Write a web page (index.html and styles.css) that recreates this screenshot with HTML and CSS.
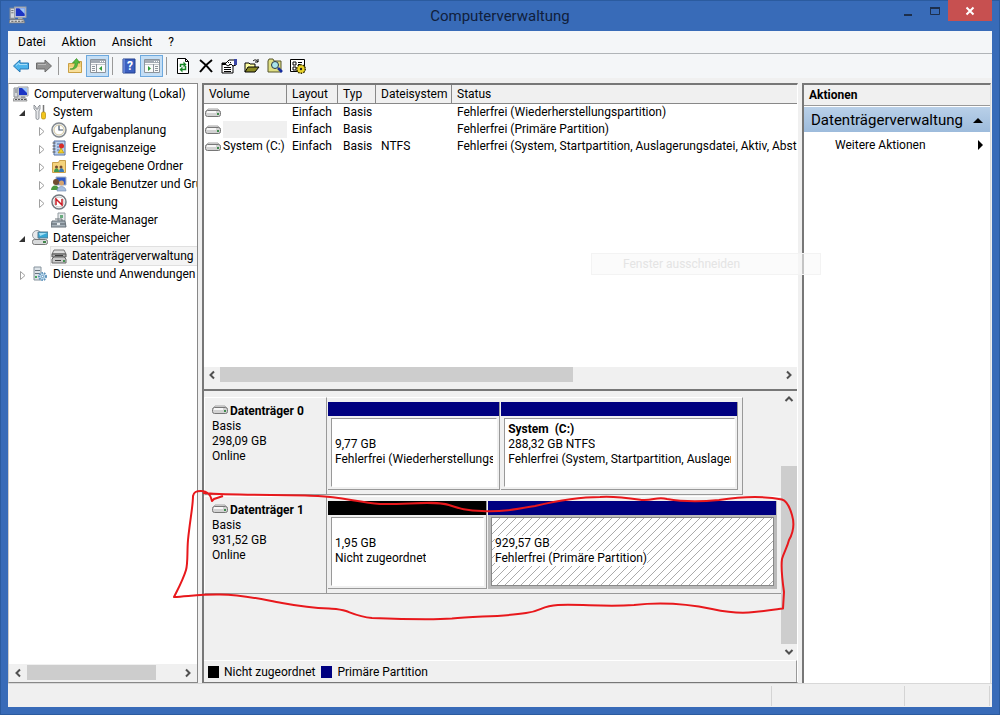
FILE: index.html
```html
<!DOCTYPE html>
<html lang="de">
<head>
    <meta charset="UTF-8">
    <meta name="viewport" content="width=device-width, initial-scale=1.0">
    <title>Computerverwaltung</title>
    <link rel="stylesheet" href="styles.css">
</head>
<body>
<svg class="defs" aria-hidden="true">
    <symbol id="drive" viewBox="0 0 16 10">
        <path d="M3 1h10l2 3H1z" fill="#e9e9e9" stroke="#a5a5a5"/>
        <rect x=".5" y="2.500" width="15" height="6" rx="2" fill="#d2d2d2" stroke="#777"/>
        <path d="M2 4h9" stroke="#f7f7f7" stroke-width="2"/>
        <path d="M12 5h2v2h-2z" fill="#3f8a4c"/>
    </symbol>
    <symbol id="computer" viewBox="0 0 16 16">
        <path d="M1 2h4v9H1z" fill="#d5d8dc" stroke="#8b9097"/>
        <path d="M2 4h2M2 6h2" stroke="#70767d"/>
        <path d="M5 1h10v9H5z" fill="#dfe3e8" stroke="#9aa0a8"/>
        <path d="M6 2h8v7H6z" fill="#1c35c4"/>
        <path d="M9 2h5v5z" fill="#9cc4fa"/>
        <path d="M8 10h4v2H8z" fill="#a7abb0"/>
        <path d="M1 12h12l1 3H0z" fill="#d9dbde" stroke="#777" stroke-width=".7"/>
        <path d="M2 13.5h11" stroke="#555" stroke-dasharray="2 1"/>
    </symbol>
    <symbol id="left" viewBox="0 0 10 10"><path d="M7 1.500 3.500 5 7 8.500" fill="none" stroke="#505050" stroke-width="2"/></symbol>
    <symbol id="right" viewBox="0 0 10 10"><path d="M3 1.500 6.500 5 3 8.500" fill="none" stroke="#505050" stroke-width="2"/></symbol>
    <symbol id="up" viewBox="0 0 10 10"><path d="M1.500 7 5 3.500 8.500 7" fill="none" stroke="#505050" stroke-width="2"/></symbol>
    <symbol id="down" viewBox="0 0 10 10"><path d="M1.500 3 5 6.500 8.500 3" fill="none" stroke="#505050" stroke-width="2"/></symbol>
    <symbol id="open" viewBox="0 0 10 10"><path d="M8 2v6H2z" fill="#333"/></symbol>
    <symbol id="closed" viewBox="0 0 10 10"><path d="M3.500 1.500v8L8 5.500z" fill="#fff" stroke="#a0a0a0"/></symbol>
    <symbol id="pane" viewBox="0 0 18 16">
        <path d="M1.500 1.500h15v13h-15z" fill="#fafafa" stroke="#8d949c"/>
        <path d="M2 2h14v3H2z" fill="#a4abb4"/>
        <path d="M11 3.500h1M13 3.500h1M15 3.500h1" stroke="#fff"/>
        <path d="M2 6.500h14" stroke="#c1c5ca"/>
    </symbol>
</svg>

<div class="window">
    <header class="titlebar">
        <svg class="app-icon" viewBox="0 0 16 16"><use href="#computer"/></svg>
        <h1>Computerverwaltung</h1>
        <div class="caption">
            <button aria-label="Minimieren"><svg viewBox="0 0 12 12"><path d="M2 9h8v2H2z" fill="#1d2f4c"/></svg></button>
            <button aria-label="Maximieren"><svg viewBox="0 0 12 12"><path d="M1.500 2.500h9v7h-9z" fill="none" stroke="#1d2f4c"/><path d="M1 3h10" stroke="#1d2f4c" stroke-width="2"/></svg></button>
            <button class="close" aria-label="Schließen"><svg viewBox="0 0 12 12"><path d="m2.500 2.500 7 7m0-7-7 7" stroke="#fff" stroke-width="2"/></svg></button>
        </div>
    </header>

    <nav class="menubar">
        <button>Datei</button>
        <button>Aktion</button>
        <button>Ansicht</button>
        <button>?</button>
    </nav>

    <div class="toolbar">
        <button aria-label="Zurück"><svg viewBox="0 0 16 16"><path d="M.500 8 7 2v3h8.500v6H7v3z" fill="#4db4ec" stroke="#2878b4"/><path d="M3 7.500 6 5v1.500h8" fill="none" stroke="#a5dcf8"/></svg></button>
        <button aria-label="Vorwärts"><svg viewBox="0 0 16 16"><path d="M15.500 8 9 2v3H.500v6H9v3z" fill="#929292" stroke="#6c6c6c"/><path d="M2 6.500h8" stroke="#bbb"/></svg></button>
        <span class="sep"></span>
        <button aria-label="Eine Ebene nach oben"><svg viewBox="0 0 16 16"><path d="M1.500 5.500h5l1-2h7v11h-13z" fill="#f3cf78" stroke="#c9a045"/><path d="M2 9h12v5H2z" fill="#f8df9b"/><path d="M3 11c3 0 5-2 5-6H5.500L9.500.500 13 5h-2.500c0 5-3 7-7.500 6z" fill="#59bb3d" stroke="#3c8d29" stroke-width=".7"/></svg></button>
        <button class="active" aria-label="Konsolenstruktur ein-/ausblenden"><svg viewBox="0 0 18 16"><use href="#pane"/><path d="M7.500 6v8M3 8.500h3M3 10.500h3M3 12.500h3" stroke="#8d949c"/><path d="M13 8v5l-3-2.500z" fill="#2f9b38"/></svg></button>
        <span class="sep"></span>
        <button aria-label="Hilfe"><svg viewBox="0 0 16 16"><path d="M2 1h12v14H2z" fill="#3b5fc0" stroke="#23408f"/><path d="M3 1v14" stroke="#8ba7ec"/><text x="9" y="12" text-anchor="middle" class="help-mark">?</text></svg></button>
        <button class="active" aria-label="Aktionsbereich ein-/ausblenden"><svg viewBox="0 0 18 16"><use href="#pane"/><path d="M10.500 6v8M12 8.500h3M12 10.500h3M12 12.500h3" stroke="#8d949c"/><path d="M5 8v5l3-2.500z" fill="#2f9b38"/></svg></button>
        <span class="sep"></span>
        <button aria-label="Aktualisieren"><svg viewBox="0 0 16 16"><path d="M2.500.500h8l3 3v12h-11z" fill="#fff" stroke="#000"/><path d="M10.500.500v3h3" fill="none" stroke="#000"/><path d="M5.500 9V6.500h4M10.500 8v3.500h-4" fill="none" stroke="#168526" stroke-width="1.500"/><path d="m8.500 3.500 3 3-3 3zM7.500 8.500v6l-3-3z" fill="#168526"/></svg></button>
        <button aria-label="Löschen"><svg viewBox="0 0 16 16"><path d="M2 2c4 3 8 7 12 12M14 2C10 5 5 10 2 14" fill="none" stroke="#000" stroke-width="2"/></svg></button>
        <button aria-label="Eigenschaften"><svg viewBox="0 0 16 16"><path d="M1 5h11v10H1z" fill="#fff" stroke="#000"/><path d="M1 6h11" stroke="#000" stroke-width="2"/><path d="M3 9.500h7M3 11.500h7M3 13.500h7" stroke="#000"/><path d="m4 6 4-4h5l2 2v3l-3 1-2-2-3 2z" fill="#fff" stroke="#000"/><path d="M7 4.500h4M8 6.500h4" stroke="#111" stroke-dasharray="1 1"/><path d="M13 1h3v6h-3z" fill="#3b47a8"/></svg></button>
        <button aria-label="Öffnen"><svg viewBox="0 0 16 16"><path d="M1 14V5h4l1 1h5v3" fill="#ffffa0" stroke="#000"/><path d="m1 14 3-5h11l-4 5z" fill="#8c8b25" stroke="#000"/><path d="M9 3c2-2 4-1 5 1m0-3v3h-3" fill="none" stroke="#000"/></svg></button>
        <button aria-label="Suchen"><svg viewBox="0 0 16 16"><path d="M1 14V3l1-2h4l1 2h7v11z" fill="#dfdf83" stroke="#55552b"/><circle cx="8" cy="7" r="3.500" fill="#a8e4ea" stroke="#273547"/><path d="m11 10 4 4" stroke="#142ca0" stroke-width="2.500"/></svg></button>
        <button aria-label="Einstellungen"><svg viewBox="0 0 16 16"><path d="M.500 1.500h14v12H.500z" fill="#fff" stroke="#000"/><path d="M3 4h3v3H3zM3 9h3v3H3z" fill="none" stroke="#000"/><path d="M8 4.500h4M8 6.500h2" stroke="#000"/><circle cx="11" cy="11" r="4" fill="#e4cd20" stroke="#342f00" stroke-width="2" stroke-dasharray="1.500 1"/><circle cx="11" cy="11" r="3.500" fill="#ebd52a"/><circle cx="11" cy="11" r="1.200" fill="#222"/></svg></button>
    </div>

    <main class="panes">
        <section class="tree-pane">
            <ul class="tree">
                <li><div class="node"><svg viewBox="0 0 16 16"><use href="#computer"/></svg>Computerverwaltung (Lokal)</div></li>
                <li>
                    <div class="node"><button class="toggle" aria-label="System zuklappen"><svg viewBox="0 0 10 10"><use href="#open"/></svg></button><svg viewBox="0 0 16 16"><path d="M2 1v4l2 2v7c0 2 3 2 3 0V7l1-2V1L6 3v2H4V3z" fill="#e6e8ea" stroke="#7a7f85" stroke-width=".8"/><path d="M11.500 1v7" stroke="#777" stroke-width="1.500"/><rect x="9.500" y="8" width="4" height="7" rx="1.500" fill="#f3c61d" stroke="#b38b09" stroke-width=".7"/></svg>System</div>
                    <ul>
                        <li><div class="node"><button class="toggle" aria-label="Aufgabenplanung aufklappen"><svg viewBox="0 0 10 10"><use href="#closed"/></svg></button><svg viewBox="0 0 16 16"><circle cx="8" cy="8" r="7" fill="#eef2f5" stroke="#848a90" stroke-width="1.500"/><circle cx="8" cy="8" r="5" fill="#fff" stroke="#d4c69d"/><path d="M8 3.500V8h4" fill="none" stroke="#41566e" stroke-width="1.200"/></svg>Aufgabenplanung</div></li>
                        <li><div class="node"><button class="toggle" aria-label="Ereignisanzeige aufklappen"><svg viewBox="0 0 10 10"><use href="#closed"/></svg></button><svg viewBox="0 0 16 16"><path d="M3 1h11v14H3z" fill="#bcd1ee" stroke="#5570a5"/><path d="M1.500 3h3M1.500 6h3M1.500 9h3M1.500 12h3" stroke="#555"/><path d="M6 4h6M6 7h2M6 10h2" stroke="#4b6ca9"/><circle cx="10.500" cy="6" r="2.500" fill="#d62c29"/><path d="m10 8 3 5H7z" fill="#f3d02c" stroke="#a88700" stroke-width=".6"/></svg>Ereignisanzeige</div></li>
                        <li><div class="node"><button class="toggle" aria-label="Freigegebene Ordner aufklappen"><svg viewBox="0 0 10 10"><use href="#closed"/></svg></button><svg viewBox="0 0 16 16"><path d="M1.500 4.500h6l1-2h6v12h-13z" fill="#f5d37c" stroke="#c9a04c"/><circle cx="5.500" cy="9" r="1.500" fill="#784b30"/><circle cx="10" cy="9" r="1.500" fill="#784b30"/><path d="M3 14c0-5 5-5 5 0z" fill="#3f9950"/><path d="M8 14c0-5 5-5 5 0z" fill="#3678b8"/></svg>Freigegebene Ordner</div></li>
                        <li><div class="node"><button class="toggle" aria-label="Lokale Benutzer aufklappen"><svg viewBox="0 0 10 10"><use href="#closed"/></svg></button><svg viewBox="0 0 16 16"><path d="M5 1h10v8H5z" fill="#315ac5" stroke="#a8b3c2"/><circle cx="5" cy="6" r="3" fill="#704d31"/><circle cx="10.500" cy="7" r="2.500" fill="#d6a46f"/><path d="M0 14c0-6 8-6 8 0z" fill="#4a9942"/><path d="M6 15c0-6 9-6 9 0z" fill="#a8bfdf" stroke="#6e88b0" stroke-width=".6"/></svg>Lokale Benutzer und Gru</div></li>
                        <li><div class="node"><button class="toggle" aria-label="Leistung aufklappen"><svg viewBox="0 0 10 10"><use href="#closed"/></svg></button><svg viewBox="0 0 16 16"><circle cx="8" cy="8" r="7" fill="#fff" stroke="#737980" stroke-width="1.500"/><circle cx="8" cy="8" r="5" fill="#fff" stroke="#aaa" stroke-width=".7"/><path d="M5 11V5l6 6V5" fill="none" stroke="#ca1922" stroke-width="1.500"/></svg>Leistung</div></li>
                        <li><div class="node"><span class="toggle"></span><svg viewBox="0 0 16 16"><path d="M7 1h7v8H7z" fill="#e7eaec" stroke="#929ba0"/><path d="M9 3h3v3H9z" fill="#68aa7d"/><path d="M4 7h7v3" fill="none" stroke="#6a7278"/><path d="M1 9h13l1 6H0z" fill="#a7b2ba" stroke="#667078"/><path d="M1 12h13" stroke="#566069"/><path d="M6 11h3v2H6z" fill="#e9edef"/></svg>Geräte-Manager</div></li>
                    </ul>
                </li>
                <li>
                    <div class="node"><button class="toggle" aria-label="Datenspeicher zuklappen"><svg viewBox="0 0 10 10"><use href="#open"/></svg></button><svg viewBox="0 0 16 16"><circle cx="5" cy="5" r="4.500" fill="#e8e9eb" stroke="#969ba0"/><path d="M6 2h10v6H6z" fill="#37a7d5" stroke="#5a7d91"/><path d="M7 3h8L8 6z" fill="#a4e0f5"/><rect x=".500" y="9.500" width="15" height="5" rx="2" fill="#d8dadb" stroke="#777"/><path d="M11 11h3v2h-3z" fill="#42864b"/></svg>Datenspeicher</div>
                    <ul>
                        <li><div class="node"><span class="toggle"></span><div class="selected"><svg viewBox="0 0 16 16"><path d="M3 2h10l2 4H1z" fill="#ddd" stroke="#777"/><path d="M1 6h14v3H1z" fill="#aaa" stroke="#555"/><path d="M3 9h10l2 2v4H1v-4z" fill="#c9c9c9" stroke="#666"/><path d="M4 7.500h8M4 12.500h6" stroke="#3e3e3e"/><path d="M12 12h2v2h-2z" fill="#459351"/></svg>Datenträgerverwaltung</div></div></li>
                    </ul>
                </li>
                <li><div class="node"><button class="toggle" aria-label="Dienste aufklappen"><svg viewBox="0 0 10 10"><use href="#closed"/></svg></button><svg viewBox="0 0 16 16"><path d="M2 1h7v13H2z" fill="#dce3e8" stroke="#87949e"/><path d="M3 4.500h5M3 7.500h5" stroke="#687681"/><path d="M3 10h2v2H3z" fill="#48a45d"/><circle cx="10.500" cy="10.500" r="3.500" fill="#c2def1" stroke="#6094bc" stroke-width="2" stroke-dasharray="1.500 1"/><circle cx="10.500" cy="10.500" r="1.200" fill="#fff" stroke="#6094bc"/></svg>Dienste und Anwendungen</div></li>
            </ul>
            <div class="scroll-h">
                <button aria-label="Nach links"><svg viewBox="0 0 10 10"><use href="#left"/></svg></button>
                <div class="track"><div class="thumb tree-thumb"></div></div>
                <button aria-label="Nach rechts"><svg viewBox="0 0 10 10"><use href="#right"/></svg></button>
            </div>
        </section>

        <section class="center">
            <div class="volumes">
                <div class="list">
                    <table>
                        <colgroup><col class="c-volume"><col class="c-layout"><col class="c-type"><col class="c-fs"><col></colgroup>
                        <thead>
                            <tr><th>Volume</th><th>Layout</th><th>Typ</th><th>Dateisystem</th><th>Status</th></tr>
                        </thead>
                        <tbody>
                            <tr><td><div class="vol"><svg viewBox="0 0 16 10"><use href="#drive"/></svg><span></span></div></td><td>Einfach</td><td>Basis</td><td></td><td>Fehlerfrei (Wiederherstellungspartition)</td></tr>
                            <tr><td><div class="vol"><svg viewBox="0 0 16 10"><use href="#drive"/></svg><span class="marked"></span></div></td><td>Einfach</td><td>Basis</td><td></td><td>Fehlerfrei (Primäre Partition)</td></tr>
                            <tr><td><div class="vol"><svg viewBox="0 0 16 10"><use href="#drive"/></svg><span>System (C:)</span></div></td><td>Einfach</td><td>Basis</td><td>NTFS</td><td>Fehlerfrei (System, Startpartition, Auslagerungsdatei, Aktiv, Abstu</td></tr>
                        </tbody>
                    </table>
                </div>
                <div class="scroll-h">
                    <button aria-label="Nach links"><svg viewBox="0 0 10 10"><use href="#left"/></svg></button>
                    <div class="track"><div class="thumb list-thumb"></div></div>
                    <button aria-label="Nach rechts"><svg viewBox="0 0 10 10"><use href="#right"/></svg></button>
                </div>
            </div>

            <div class="graph">
                <div class="disks">
                    <div class="disk">
                        <div class="disk-label">
                            <strong><svg viewBox="0 0 16 10"><use href="#drive"/></svg>Datenträger 0</strong>
                            <span>Basis</span><span>298,09 GB</span><span>Online</span>
                        </div>
                        <div class="parts first">
                            <div class="part recovery">
                                <div class="band"></div>
                                <div class="info"><b></b><span>9,77 GB</span><span>Fehlerfrei (Wiederherstellungs</span></div>
                            </div>
                            <div class="part system">
                                <div class="band"></div>
                                <div class="info"><b>System&nbsp; (C:)</b><span>288,32 GB NTFS</span><span>Fehlerfrei (System, Startpartition, Auslageru</span></div>
                            </div>
                        </div>
                    </div>
                    <div class="disk">
                        <div class="disk-label">
                            <strong><svg viewBox="0 0 16 10"><use href="#drive"/></svg>Datenträger 1</strong>
                            <span>Basis</span><span>931,52 GB</span><span>Online</span>
                        </div>
                        <div class="parts">
                            <div class="part free">
                                <div class="band unallocated"></div>
                                <div class="info"><b></b><span>1,95 GB</span><span>Nicht zugeordnet</span></div>
                            </div>
                            <div class="part primary chosen">
                                <div class="band"></div>
                                <div class="info"><b></b><span>929,57 GB</span><span>Fehlerfrei (Primäre Partition)</span></div>
                            </div>
                        </div>
                    </div>
                </div>
                <div class="scroll-v">
                    <button aria-label="Nach oben"><svg viewBox="0 0 10 10"><use href="#up"/></svg></button>
                    <div class="track"><div class="thumb"></div></div>
                    <button aria-label="Nach unten"><svg viewBox="0 0 10 10"><use href="#down"/></svg></button>
                </div>
            </div>
            <div class="legend">
                <span class="swatch unallocated"></span><span>Nicht zugeordnet</span>
                <span class="swatch"></span><span>Primäre Partition</span>
            </div>
        </section>

        <aside class="actions">
            <h2>Aktionen</h2>
            <button class="group">Datenträgerverwaltung<svg viewBox="0 0 10 10"><path d="M0 8h10L5 3z"/></svg></button>
            <button class="more">Weitere Aktionen<svg viewBox="0 0 10 10"><path d="M3 0v10l5-5z"/></svg></button>
        </aside>
    </main>

    <footer class="statusbar"><span></span><span></span><span></span></footer>

    <div class="ghost">Fenster ausschneiden</div>
    <svg class="marker" viewBox="0 0 1000 715" preserveAspectRatio="none" aria-hidden="true">
        <path d="M223 496 214 499 212 501C211 495 207 491 201 491C196 491 194 492 193 496C193 506 190 520 188 540C187 552 188 563 186 570C183 580 178 589 174 597C190 596 205 594 220 594.500C246 595 260 599 282 603C298 606 312 608 329 608.500C336 609 340 609 346 611C354 614 360 617 372 618C399 619 430 620 452 618.500C476 616 502 617 526 613C543 611 540 606 558 605C582 604 604 607 634 605C660 602 688 604 712 609C726 612 741 614 754 612C766 611 772 610 783 608.500L784 592C782 578 781 566 782 559C784 552 787 548 789 540C793 533 795 525 792 515C790 508 787 501 782 499.500C764 496 739 497 719 500C698 502 684 502 667 499C657 496 653 501 642 500C628 498 615 496 600 497C574 497 552 502 535 506C518 509 503 512 482 511C466 511 458 508 449 505C434 500 405 505 380 504C358 502 340 497 318 496C288 494 244 496 203 493" fill="none" stroke="#e8181c" stroke-width="2" stroke-linejoin="round"/>
    </svg>
</div>
</body>
</html>
```
FILE: styles.css
```css
* {
    box-sizing: border-box;
}
body {
    margin: 0;
    color: #000;
    font: 12px/18px Roboto, "Open Sans", sans-serif;
}
button {
    margin: 0;
    padding: 0;
    border: 0;
    background: none;
    color: inherit;
    font: inherit;
}
svg {
    display: block;
    flex: none;
}
ul {
    margin: 0;
    padding: 0;
    list-style: none;
}
.defs {
    position: absolute;
    width: 0;
    height: 0;
}
.window {
    position: relative;
    display: flex;
    flex-direction: column;
    min-height: 100vh;
    padding: 0 8px 8px;
    background: #386bb8;
    box-shadow: inset 0 0 0 1px #2b5b9f;
}

/* title bar */
.titlebar {
    display: grid;
    grid-template-columns: 1fr auto 1fr;
    height: 31px;
}
.app-icon {
    width: 18px;
    height: 18px;
    margin: 6px 0 0 1px;
}
.titlebar h1 {
    margin: 0;
    color: #10203c;
    font-size: 15px;
    font-weight: 400;
    line-height: 32px;
}
.caption {
    display: flex;
    justify-content: flex-end;
}
.caption button {
    display: flex;
    align-items: center;
    justify-content: center;
    width: 27px;
    height: 21px;
}
.caption svg {
    width: 12px;
    height: 12px;
}
.caption .close {
    width: 44px;
    background: #c75050;
}

/* menu and toolbar */
.menubar {
    display: flex;
    gap: 16px;
    height: 23px;
    padding: 0 10px;
    border-bottom: 1px solid #b0b4b8;
    background: #f4f6f8;
    line-height: 22px;
}
.toolbar {
    display: flex;
    align-items: center;
    height: 24px;
    padding: 0 1px;
    background: #f4f6f8;
}
.toolbar button {
    display: flex;
    align-items: center;
    justify-content: center;
    width: 23px;
    height: 22px;
}
.toolbar .active {
    border: 1px solid #6da9de;
    background: #c4def5;
}
.toolbar svg {
    width: 16px;
    height: 16px;
}
.toolbar .active svg {
    width: 18px;
}
.help-mark {
    fill: #fff;
    font-size: 12px;
    font-weight: 700;
}
.sep {
    width: 8px;
    height: 18px;
    background: linear-gradient(#999, #999) 3px 0 / 1px 100% no-repeat;
}

/* three panes */
.panes {
    flex: 1;
    display: grid;
    grid-template-columns: 190px minmax(0, 1fr) 189px;
    gap: 4px;
    padding: 5px 1px 0 0;
    background: #f0f0f0;
}
.tree-pane {
    display: flex;
    flex-direction: column;
    min-width: 0;
    border: 1px solid #888;
    border-left-color: #ccc;
    background: #fff;
}
.tree {
    flex: 1;
    padding: 1px 0 0 4px;
    overflow: hidden;
}
.tree ul {
    padding-left: 19px;
}
.node,
.selected {
    display: flex;
    align-items: center;
    height: 18px;
    white-space: nowrap;
}
.node svg {
    width: 16px;
    height: 16px;
    margin-right: 5px;
}
.node .toggle {
    flex: none;
    width: 19px;
}
.node .toggle svg {
    width: 10px;
    height: 10px;
    margin: 2px 0 0 4px;
}
.selected {
    flex: 1;
    background: #f4f4f4;
    box-shadow: 0 0 0 1px #e0e0e0;
}

/* scroll bars */
.scroll-h,
.scroll-v {
    display: flex;
    background: #f0f0f0;
}
.scroll-h {
    height: 16px;
}
.scroll-v {
    flex-direction: column;
    width: 16px;
}
.scroll-h button,
.scroll-v button {
    display: flex;
    flex: none;
    align-items: center;
    justify-content: center;
    width: 16px;
    height: 16px;
}
.scroll-h svg,
.scroll-v svg {
    width: 10px;
    height: 10px;
}
.track {
    flex: 1;
}
.thumb {
    height: 15px;
    background: #cdcdcd;
}
.tree-pane .scroll-h {
    height: 18px;
    padding: 1px 1px 0;
}
.tree-thumb {
    width: 84%;
    margin-left: 1px;
}
.list-thumb {
    width: 63%;
}
.scroll-v .track {
    display: flex;
    flex-direction: column;
    justify-content: flex-end;
}
.scroll-v .thumb {
    height: 75%;
}

/* volume list */
.center {
    display: flex;
    flex-direction: column;
    min-width: 0;
    border: 2px solid #777;
    border-width: 2px 1px 1px 2px;
    border-right-color: #fff;
}
.volumes {
    flex: 1;
    display: flex;
    flex-direction: column;
    padding-bottom: 6px;
    border-bottom: 2px solid #777;
}
.list {
    flex: 1;
    overflow: hidden;
    background: #fff;
}
table {
    width: 100%;
    table-layout: fixed;
    border-collapse: separate;
    border-spacing: 0;
}
.c-volume {
    width: 83px;
}
.c-layout {
    width: 51px;
}
.c-type {
    width: 38px;
}
.c-fs {
    width: 76px;
}
th,
td {
    padding: 0 0 0 5px;
    overflow: hidden;
    font-weight: 400;
    line-height: 17px;
    text-align: left;
    white-space: nowrap;
}
th {
    height: 19px;
    border-right: 1px solid #888;
    border-bottom: 1px solid #888;
    background: #f0f0f0;
}
th:last-child {
    border-right: 0;
}
td {
    height: 17px;
}
td:first-child {
    padding-left: 1px;
}
.vol {
    display: flex;
    align-items: center;
}
.vol svg {
    width: 16px;
    height: 10px;
    margin-right: 2px;
}
.vol span {
    flex: 1;
    height: 17px;
}
.vol .marked {
    background: #f0f0f0;
}

/* disk graph */
.graph {
    display: flex;
    height: 269px;
}
.disks {
    flex: 1;
    min-width: 0;
    padding-top: 6px;
}
.disk {
    display: flex;
    height: 99px;
    padding-bottom: 1px;
    line-height: 15px;
}
.disk-label {
    display: flex;
    flex: none;
    flex-direction: column;
    width: 123px;
    padding: 6px 7px 0;
    border: 1px solid #fff;
    border-right-color: #999;
    border-bottom-color: #999;
}
.disk-label strong {
    display: flex;
}
.disk-label strong svg {
    width: 16px;
    height: 10px;
    margin: 1px 2px 0 0;
}
.parts {
    display: flex;
    flex: 1;
    min-width: 0;
    gap: 1px;
    padding: 4px 4px 4px 1px;
    border-top: 1px solid #fff;
    border-bottom: 1px solid #999;
}
.parts.first {
    flex: none;
    width: 73%;
    max-width: 416px;
    border-right: 1px solid #999;
}
.part {
    display: flex;
    flex-direction: column;
    min-width: 0;
    border: 1px solid #999;
    border-width: 0 1px 1px 0;
}
.recovery {
    flex: 172;
}
.system {
    flex: 237;
}
.free {
    flex: 158;
}
.primary {
    flex: 288;
}
.band {
    height: 14px;
    background: #000080;
}
.band.unallocated,
.swatch.unallocated {
    background: #000;
}
.info {
    display: flex;
    flex: 1;
    flex-direction: column;
    align-items: flex-start;
    margin: 2px 2px 2px 3px;
    padding: 3px;
    overflow: hidden;
    border: 1px solid #999;
    border-color: #999 #fff #fff #999;
    background: #fff;
    white-space: nowrap;
}
.info b {
    height: 15px;
}
.info span {
    max-width: 100%;
    overflow: hidden;
}
.chosen {
    border-color: #b9b9b9;
    background: #b9b9b9;
}
.chosen .info {
    border-color: #888;
    background: #fff url("data:image/svg+xml,%3Csvg xmlns='http://www.w3.org/2000/svg' width='8' height='8'%3E%3Cpath d='M-1 1 1-1M0 8 8 0M7 9 9 7' stroke='%23aaa'/%3E%3C/svg%3E");
}
.chosen .info span {
    background: #fff;
}
.legend {
    display: flex;
    align-items: center;
    height: 22px;
    padding-left: 4px;
    border-top: 1px solid #fff;
    border-right: 1px solid #999;
}
.swatch {
    width: 11px;
    height: 12px;
    margin-right: 5px;
    background: #000080;
}
.legend span + .swatch {
    margin-left: 6px;
}

/* actions */
.actions {
    border: 2px solid #777;
    border-width: 2px 1px 0 2px;
    border-right-color: #ddd;
    background: #fff;
}
.actions h2 {
    height: 21px;
    margin: 0 0 1px;
    padding-left: 5px;
    border-bottom: 1px solid #999;
    background: #f0f0f0;
    font-size: 12px;
    line-height: 21px;
}
.actions button {
    display: flex;
    align-items: center;
    justify-content: space-between;
    width: 100%;
    height: 25px;
}
.actions svg {
    width: 10px;
    height: 10px;
}
.actions .group {
    padding: 0 7px;
    background: linear-gradient(#b9d0e8, #9dbbdc);
    font-size: 15px;
}
.actions .more {
    padding: 0 5px 0 31px;
}

.statusbar {
    display: grid;
    grid-template-columns: 1fr 133px 85px;
    height: 24px;
    padding: 2px 2px 1px 0;
    border-top: 1px solid #d8d8d8;
    background: #f0f0f0;
}
.statusbar span {
    border-right: 1px solid #d4d4d4;
}

/* fading menu and pen stroke lie over the window */
.ghost {
    position: absolute;
    top: 253px;
    left: 591px;
    width: 230px;
    height: 22px;
    padding-left: 31px;
    border: 1px solid #f3f3f3;
    background: rgba(248, 248, 248, .6);
    color: #e4e4e4;
    line-height: 20px;
}
.marker {
    position: absolute;
    inset: 0;
    width: 100%;
    height: 100%;
    pointer-events: none;
}
```
